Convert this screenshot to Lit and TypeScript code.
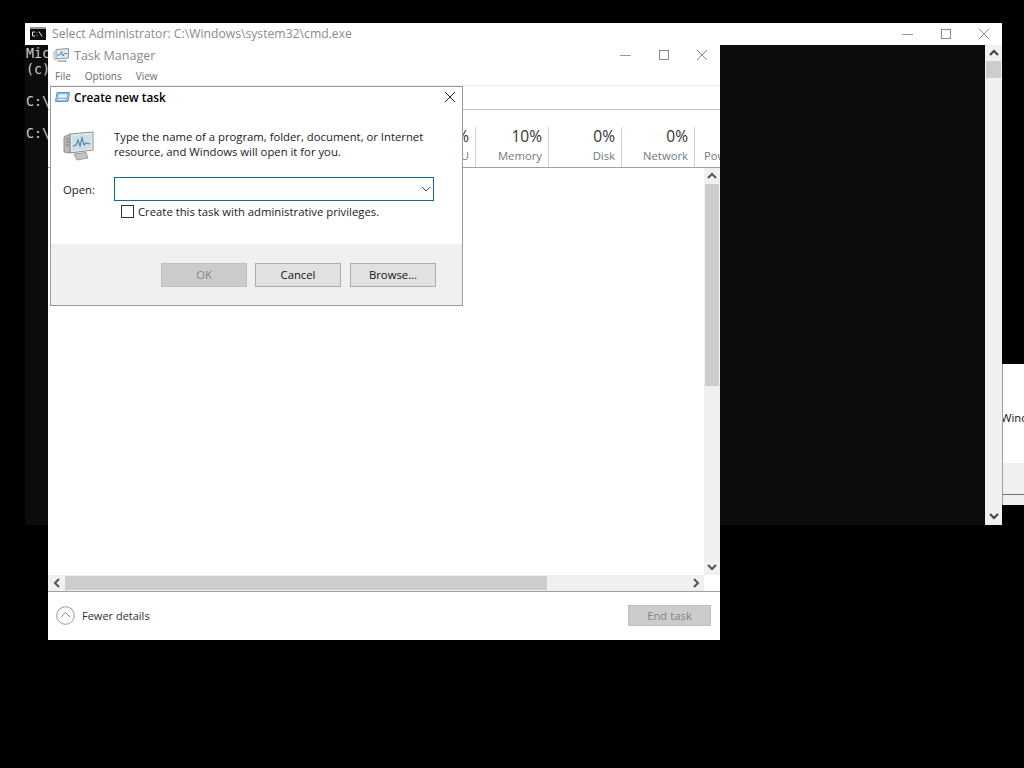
import { LitElement, html, css, svg } from "lit";
import { customElement } from "lit/decorators.js";

const chevron = (d: string, stroke = "#555", w = 2) => html`<svg class="ico" width="10" height="10" viewBox="0 0 10 10"><path d=${d} fill="none" stroke=${stroke} stroke-width=${w}/></svg>`;
const UP = "M1 7 L5 3 L9 7";
const DOWN = "M1 3 L5 7 L9 3";
const LEFT = "M7 1 L3 5 L7 9";
const RIGHT = "M3 1 L7 5 L3 9";

const winButtons = html`
  <div class="winbtns">
    <svg width="12" height="12" viewBox="0 0 12 12"><path d="M0 6.5H11" stroke="#9a9a9a" fill="none"/></svg>
    <svg width="12" height="12" viewBox="0 0 12 12"><rect x="1.5" y="1.5" width="9" height="9" stroke="#8a8a8a" fill="none"/></svg>
    <svg width="12" height="12" viewBox="0 0 12 12"><path d="M1 1L11 11M11 1L1 11" stroke="#8a8a8a" fill="none"/></svg>
  </div>`;

const monitorSmall = svg`<svg width="17" height="15" viewBox="0 0 17 15">
  <path d="M3 1.5L15.5 0.5V10L3 11Z" fill="#dfe7ec" stroke="#8d979e"/>
  <path d="M4 7L7 7L8.5 3.5L10 8L11.5 5.5L14.5 5.5" fill="none" stroke="#4c93b8" stroke-width="1"/>
  <path d="M1 3V11L3 12" fill="none" stroke="#a9a9a9"/>
  <path d="M4 12.5L13 12L14 14H5Z" fill="#b5b5b5"/>
</svg>`;

const monitorLarge = svg`<svg width="32" height="30" viewBox="0 0 32 30">
  <path d="M7 3L30 1V19L7 22Z" fill="#e4e9ec" stroke="#8b8f92"/>
  <path d="M9 5L28 3.5V17.5L9 20Z" fill="#cfdde5"/>
  <path d="M10 15L13 14L15 9L17 15L19 7L21 14L23 12L27 13" fill="none" stroke="#3f88ad" stroke-width="1.1"/>
  <path d="M1 6L7 3V22L1 21Z" fill="#b9b9b9" stroke="#8f8f8f"/>
  <path d="M11 23L23 21.5L25 27L14 29Z" fill="#c4c4c4" stroke="#9b9b9b"/>
  <path d="M3 8H6M3 11H6M3 14H6" stroke="#777"/>
</svg>`;

const runIcon = svg`<svg width="15" height="10" viewBox="0 0 15 10">
  <path d="M2 0.5H14.5L13 9.5H0.5Z" fill="#8cc0ea" stroke="#5a9bd0"/>
  <path d="M4 2.5H12L11.5 5.5H3.5Z" fill="#eef6fc"/>
  <path d="M3 7.5H10.5" stroke="#e4f0fa"/>
</svg>`;

const cmdIcon = svg`<svg width="16" height="13" viewBox="0 0 16 13">
  <rect x="0" y="0" width="16" height="13" fill="#0c0c0c"/>
  <rect x="0" y="0" width="16" height="2" fill="#9a9a9a"/>
  <path d="M2.5 5H5M2.5 5V9H5M7 5.5V6.2M7 8V8.7M9 4.5L12 9.5" fill="none" stroke="#e8e8e8" stroke-width="1"/>
</svg>`;

@customElement("app-root")
export class AppRoot extends LitElement {
  static styles = css`
    :host {
      display: block;
      position: relative;
      width: 1024px;
      height: 768px;
      overflow: hidden;
      background: #000;
      font-family: "Open Sans", "Noto Sans", sans-serif;
      font-size: 11.3px;
      color: #1a1a1a;
    }
    .ico { display: block; }
    .win { position: absolute; box-sizing: border-box; display: flex; flex-direction: column; overflow: hidden; }

    /* Command prompt */
    .cmd { left: 25px; top: 23px; width: 977px; height: 502px; background: #f0f0f0; }
    .cmd-title { height: 22px; flex: none; box-sizing: border-box; background: #fff; display: flex; align-items: center; padding: 0 5px 1px; gap: 6px; color: #8b8b8b; font-size: 12.2px; white-space: nowrap; }
    .cmd-main { flex: 1; display: flex; min-height: 0; }
    .console { flex: 1; background: #0c0c0c; color: #cccccc; font: 13.3px/16px "DejaVu Sans Mono", "Liberation Mono", monospace; padding: 1px 0 0 1px; white-space: pre; }
    .console div { height: 16px; }
    .cmd-sb { width: 17px; flex: none; display: flex; flex-direction: column; align-items: center; justify-content: space-between; background: #f0f0f0; padding: 3px 0 4px; box-sizing: border-box; position: relative; }
    .cmd-thumb { position: absolute; left: 1px; right: 1px; top: 16px; height: 17px; background: #cdcdcd; }
    .winbtns { margin-left: auto; display: flex; gap: 26px; align-items: center; padding-right: 7px; }

    /* Task manager */
    .tm { left: 48px; top: 44px; width: 672px; height: 596px; background: #fff; }
    .tm-title { height: 22px; flex: none; display: flex; align-items: center; gap: 4px; padding: 0 5px; color: #8b8b8b; font-size: 12.5px; white-space: nowrap; }
    .tm-menu { height: 20px; flex: none; box-sizing: border-box; display: flex; gap: 14px; align-items: center; padding-left: 7px; color: #6b6b6b; font-size: 10px; border-bottom: 1px solid #ececec; }
    .tm-tabs { height: 24px; flex: none; border-bottom: 1px solid #c4c4c4; box-sizing: border-box; }
    .tm-head { height: 58px; flex: none; box-sizing: border-box; border-bottom: 1px solid #a0a0a0; display: flex; padding-top: 17px; padding-left: 356px; }
    .col { box-sizing: border-box; height: 40px; border-right: 1px solid #d0d0d0; text-align: right; padding-right: 6px; white-space: nowrap; flex: none; }
    .col .pct { font-size: 15.5px; line-height: 19px; color: #333; }
    .col .lbl { line-height: 20px; color: #6d7a88; }
    .col.power { border: 0; text-align: left; padding: 19px 0 0 9px; width: 40px; color: #6d7a88; line-height: 20px; }
    .tm-body { flex: 1; display: grid; grid-template-columns: 1fr 16px; grid-template-rows: 1fr 16px; min-height: 0; }
    .content { background: #fff; }
    .vsb { background: #f0f0f0; display: flex; flex-direction: column; align-items: center; }
    .vsb .btn { height: 16px; display: flex; align-items: center; justify-content: center; flex: none; }
    .vsb .thumb { height: 202px; width: 14px; background: #cdcdcd; flex: none; }
    .vsb .rest { flex: 1; }
    .hsb { background: #f0f0f0; display: flex; align-items: center; }
    .hsb .btn { width: 17px; height: 16px; flex: none; display: flex; align-items: center; justify-content: center; }
    .hsb .thumb { width: 482px; height: 14px; background: #cdcdcd; flex: none; }
    .hsb .rest { flex: 1; }
    .corner { background: #fff; }
    .tm-foot { height: 49px; flex: none; box-sizing: border-box; border-top: 1px solid #a0a0a0; display: flex; align-items: center; padding: 0 9px 2px 8px; }
    .fewer { display: flex; align-items: center; gap: 7px; color: #333; font-size: 11px; }
    .endtask { margin-left: auto; width: 83px; height: 21px; box-sizing: border-box; background: #cccccc; border: 1px solid #bfbfbf; color: #838383; display: flex; align-items: center; justify-content: center; }

    /* Dialog */
    .dlg { left: 50px; top: 86px; width: 413px; height: 220px; background: #fff; border: 1px solid #9b9b9b; }
    .dlg-title { height: 20px; flex: none; display: flex; align-items: center; gap: 4px; padding: 0 5px 0 4px; color: #000; font-weight: 600; font-size: 11.8px; white-space: nowrap; }
    .dlg-title .x { margin-left: auto; padding-right: 1px; }
    .dlg-body { flex: 1; display: flex; flex-direction: column; padding: 22px 28px 0 12px; min-height: 0; }
    .intro { display: flex; gap: 19px; align-items: flex-start; }
    .intro .big { padding-top: 2px; }
    .intro p { margin: 0; line-height: 15px; color: #1a1a1a; white-space: nowrap; }
    .open { display: flex; align-items: center; margin-top: 13px; }
    .combo { margin-left: auto; width: 320px; height: 24px; box-sizing: border-box; border: 1px solid #0f6a94; display: flex; align-items: center; justify-content: flex-end; padding-right: 2px; }
    .chk { display: flex; align-items: center; gap: 4px; margin: 3px 0 0 58px; white-space: nowrap; }
    .box { width: 13px; height: 13px; box-sizing: border-box; border: 1px solid #333; flex: none; }
    .dlg-foot { height: 61px; flex: none; background: #f0f0f0; display: flex; justify-content: flex-end; gap: 8px; padding: 18px 26px 0 0; box-sizing: border-box; }
    .b { width: 86px; height: 24px; margin-top: 1px; padding-bottom: 2px; box-sizing: border-box; background: #e1e1e1; border: 1px solid #adadad; color: #111; display: flex; align-items: center; justify-content: center; }
    .b.off { background: #cccccc; border-color: #bfbfbf; color: #838383; }
    .b.browse { margin-left: 1px; }

    /* Window behind, right edge */
    .other { left: 1002px; top: 364px; width: 22px; height: 141px; background: #fff; border-left: 1px solid #a0a0a0; }
    .other-main { height: 99px; flex: none; display: flex; align-items: center; padding-top: 8px; box-sizing: border-box; margin-left: -2px; color: #111; white-space: nowrap; }
    .other-band { height: 31px; flex: none; background: #f0f0f0; border-bottom: 1px solid #6e6e6e; }
    .other-end { flex: 1; background: #f0f0f0; }
  `;

  private col(width: number, pct: string, lbl: string) {
    return html`<div class="col" style="width:${width}px"><div class="pct">${pct}</div><div class="lbl">${lbl}</div></div>`;
  }

  render() {
    return html`
      <div class="win other">
        <div class="other-main">Windows</div>
        <div class="other-band"></div>
        <div class="other-end"></div>
      </div>

      <div class="win cmd">
        <div class="cmd-title">${cmdIcon}<span>Select Administrator: C:\\Windows\\system32\\cmd.exe</span>${winButtons}</div>
        <div class="cmd-main">
          <div class="console"><div>Mic</div><div>(c)</div><div></div><div>C:\\</div><div></div><div>C:\\</div></div>
          <div class="cmd-sb">
            ${chevron(UP, "#444")}
            <div class="cmd-thumb"></div>
            ${chevron(DOWN, "#444")}
          </div>
        </div>
      </div>

      <div class="win tm">
        <div class="tm-title">${monitorSmall}<span>Task Manager</span>${winButtons}</div>
        <div class="tm-menu"><span>File</span><span>Options</span><span>View</span></div>
        <div class="tm-tabs"></div>
        <div class="tm-head">
          ${this.col(72, "%", "CPU")}
          ${this.col(73, "10%", "Memory")}
          ${this.col(73, "0%", "Disk")}
          ${this.col(73, "0%", "Network")}
          <div class="col power">Power</div>
        </div>
        <div class="tm-body">
          <div class="content"></div>
          <div class="vsb">
            <div class="btn">${chevron(UP)}</div>
            <div class="thumb"></div>
            <div class="rest"></div>
            <div class="btn">${chevron(DOWN)}</div>
          </div>
          <div class="hsb">
            <div class="btn">${chevron(LEFT)}</div>
            <div class="thumb"></div>
            <div class="rest"></div>
            <div class="btn">${chevron(RIGHT)}</div>
          </div>
          <div class="corner"></div>
        </div>
        <div class="tm-foot">
          <div class="fewer">
            <svg width="19" height="19" viewBox="0 0 19 19"><circle cx="9.5" cy="9.5" r="8.8" fill="#fff" stroke="#9a9a9a"/><path d="M5 11L9.5 6.5L14 11" fill="none" stroke="#8a8a8a"/></svg>
            <span>Fewer details</span>
          </div>
          <div class="endtask">End task</div>
        </div>
      </div>

      <div class="win dlg">
        <div class="dlg-title">
          ${runIcon}<span>Create new task</span>
          <svg class="x" width="12" height="12" viewBox="0 0 12 12"><path d="M1 1L11 11M11 1L1 11" stroke="#222" fill="none"/></svg>
        </div>
        <div class="dlg-body">
          <div class="intro">
            <div class="big">${monitorLarge}</div>
            <p>Type the name of a program, folder, document, or Internet<br />resource, and Windows will open it for you.</p>
          </div>
          <div class="open">
            <span>Open:</span>
            <div class="combo">${chevron(DOWN, "#444", 1)}</div>
          </div>
          <div class="chk"><div class="box"></div><span>Create this task with administrative privileges.</span></div>
        </div>
        <div class="dlg-foot">
          <div class="b off">OK</div>
          <div class="b">Cancel</div>
          <div class="b browse">Browse...</div>
        </div>
      </div>
    `;
  }
}
